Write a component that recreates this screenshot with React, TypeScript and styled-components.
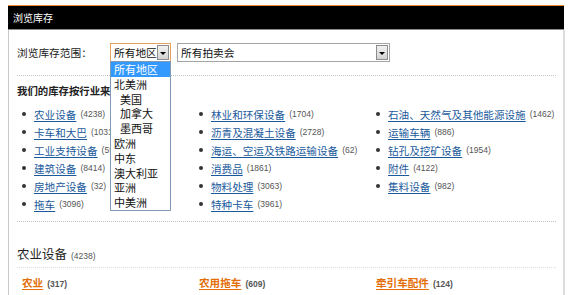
import styled, { createGlobalStyle } from "styled-components"

const GlobalStyle = createGlobalStyle`
  html, body {
    margin: 0;
    padding: 0;
    background: #fff;
  }
  body {
    font-family: "Noto Sans CJK SC", "Liberation Sans", sans-serif;
    color: #222;
  }
`

interface IItem {
  name: string
  count: number
}

const columns: IItem[][] = [
  [
    { name: "农业设备", count: 4238 },
    { name: "卡车和大巴", count: 1031 },
    { name: "工业支持设备", count: 5986 },
    { name: "建筑设备", count: 8414 },
    { name: "房地产设备", count: 32 },
    { name: "拖车", count: 3096 },
  ],
  [
    { name: "林业和环保设备", count: 1704 },
    { name: "沥青及混凝土设备", count: 2728 },
    { name: "海运、空运及铁路运输设备", count: 62 },
    { name: "消费品", count: 1861 },
    { name: "物料处理", count: 3063 },
    { name: "特种卡车", count: 3961 },
  ],
  [
    { name: "石油、天然气及其他能源设施", count: 1462 },
    { name: "运输车辆", count: 886 },
    { name: "钻孔及挖矿设备", count: 1954 },
    { name: "附件", count: 4122 },
    { name: "集料设备", count: 982 },
  ],
]

const regions = [
  { name: "所有地区", sub: false },
  { name: "北美洲", sub: false },
  { name: "美国", sub: true },
  { name: "加拿大", sub: true },
  { name: "墨西哥", sub: true },
  { name: "欧洲", sub: false },
  { name: "中东", sub: false },
  { name: "澳大利亚", sub: false },
  { name: "亚洲", sub: false },
  { name: "中美洲", sub: false },
]

const subCategories: IItem[] = [
  { name: "农业", count: 317 },
  { name: "农用拖车", count: 609 },
  { name: "牵引车配件", count: 124 },
]

// Styles
const Page = styled.div`
  padding: 5px 0 0 8px;
`
const Panel = styled.div`
  width: 557px;
`
const Header = styled.div`
  background: #000;
  border-top: 1px solid #ee8a2a;
  border-bottom: 1px solid #8a8a8a;
  height: 23px;
  line-height: 23px;
  color: #fff;
  font-size: 10px;
  padding-left: 5px;
  margin-right: 1px;
`
const Body = styled.div`
  border-left: 1px solid #c9c9c9;
  border-right: 2px solid #dcdcdc;
  padding: 0 7px 0 8px;
`
const Section = styled.div<{ $top: number; $bottom: number; $line?: boolean }>`
  padding: ${p => p.$top}px 0 ${p => p.$bottom}px;
  border-bottom: ${p => (p.$line ? "1px dotted #c4c4c4" : "none")};
`
const ScopeRow = styled.div`
  display: flex;
  align-items: center;
  height: 19px;
`
const ScopeLabel = styled.span`
  width: 93px;
  font-size: 10.7px;
  color: #222;
`
const SelectWrap = styled.div`
  position: relative;
  margin-right: 6px;
`
const SelectBox = styled.div<{ $width: number; $focus?: boolean }>`
  width: ${p => p.$width}px;
  height: 19px;
  box-sizing: border-box;
  border: 1px solid ${p => (p.$focus ? "#e6a25c" : "#a5a5a5")};
  background: #fff;
  display: flex;
  align-items: center;
  justify-content: space-between;
  padding: 0 1px 0 3px;
  font-size: 10.7px;
  color: #111;
`
const ArrowButton = styled.span`
  width: 12px;
  height: 15px;
  box-sizing: border-box;
  border: 1px solid #8c8c8c;
  background: linear-gradient(#f2f2f2, #d2d2d2);
  display: flex;
  align-items: center;
  justify-content: center;
  &::after {
    content: "";
    border-left: 3px solid transparent;
    border-right: 3px solid transparent;
    border-top: 3px solid #000;
    margin-top: 1px;
  }
`
const DropList = styled.ul`
  position: absolute;
  top: 18px;
  left: 0;
  width: 61px;
  box-sizing: border-box;
  margin: 0;
  padding: 0;
  list-style: none;
  background: #fff;
  border: 1px solid #7f9bb8;
  z-index: 5;
`
const DropItem = styled.li<{ $sub: boolean; $active?: boolean }>`
  height: 14.8px;
  line-height: 14.8px;
  font-size: 11px;
  padding-left: ${p => (p.$sub ? 9 : 3)}px;
  background: ${p => (p.$active ? "#3399ff" : "transparent")};
  color: ${p => (p.$active ? "#fff" : "#111")};
  white-space: nowrap;
`
const BoldTitle = styled.div`
  font-size: 10.4px;
  font-weight: bold;
  line-height: 14px;
  color: #222;
`
const CatList = styled.ul`
  display: grid;
  grid-template-columns: repeat(3, 177px);
  grid-template-rows: repeat(6, 18px);
  grid-auto-flow: column;
  margin: 7px 0 0;
  padding: 0;
  list-style: none;
`
const CatItem = styled.li`
  display: flex;
  align-items: center;
  white-space: nowrap;
  &::before {
    content: "";
    flex-shrink: 0;
    width: 4px;
    height: 4px;
    border-radius: 50%;
    background: #333;
    margin: 0 8px 0 5px;
  }
`
const CatLink = styled.a`
  color: #1a5a9c;
  font-size: 10.6px;
  text-decoration: underline;
  text-underline-offset: 2px;
`
const Count = styled.span<{ $bold?: boolean }>`
  font-family: "Liberation Sans", "DejaVu Sans", sans-serif;
  font-size: 8.5px;
  color: #555;
  font-weight: ${p => (p.$bold ? "bold" : "normal")};
  margin-left: 4px;
`
const GroupTitle = styled.div`
  font-size: 12.5px;
  height: 20px;
  line-height: 20px;
  color: #222;
  padding-bottom: 3px;
  border-bottom: 1px dotted #dedede;
`
const SubRow = styled.div`
  display: grid;
  grid-template-columns: repeat(3, 177px);
  height: 16px;
  margin-top: 4px;
  padding-left: 5px;
  line-height: 16px;
`
const SubLink = styled.a`
  color: #e46f0a;
  font-size: 10.6px;
  font-weight: bold;
  text-decoration: underline;
  text-underline-offset: 2px;
`

const App: React.FC = () => {
  return (
    <Page>
      <GlobalStyle />
      <Panel>
        <Header>浏览库存</Header>
        <Body>
          <Section $top={13} $bottom={13} $line>
            <ScopeRow>
              <ScopeLabel>浏览库存范围：</ScopeLabel>
              <SelectWrap>
                <SelectBox $width={61} $focus>
                  所有地区
                  <ArrowButton />
                </SelectBox>
                <DropList>
                  {regions.map((r, i) => (
                    <DropItem key={r.name} $sub={r.sub} $active={i === 0}>
                      {r.name}
                    </DropItem>
                  ))}
                </DropList>
              </SelectWrap>
              <SelectWrap>
                <SelectBox $width={213}>
                  所有拍卖会
                  <ArrowButton />
                </SelectBox>
              </SelectWrap>
            </ScopeRow>
          </Section>
          <Section $top={8} $bottom={8} $line>
            <BoldTitle>我们的库存按行业来浏览</BoldTitle>
            <CatList>
              {columns.flat().map(item => (
                <CatItem key={item.name}>
                  <CatLink href="#">{item.name}</CatLink>
                  <Count>({item.count})</Count>
                </CatItem>
              ))}
            </CatList>
          </Section>
          <Section $top={22} $bottom={10}>
            <GroupTitle>
              农业设备<Count>(4238)</Count>
            </GroupTitle>
            <SubRow>
              {subCategories.map(item => (
                <span key={item.name}>
                  <SubLink href="#">{item.name}</SubLink>
                  <Count $bold>({item.count})</Count>
                </span>
              ))}
            </SubRow>
          </Section>
        </Body>
      </Panel>
    </Page>
  )
}

export default App
